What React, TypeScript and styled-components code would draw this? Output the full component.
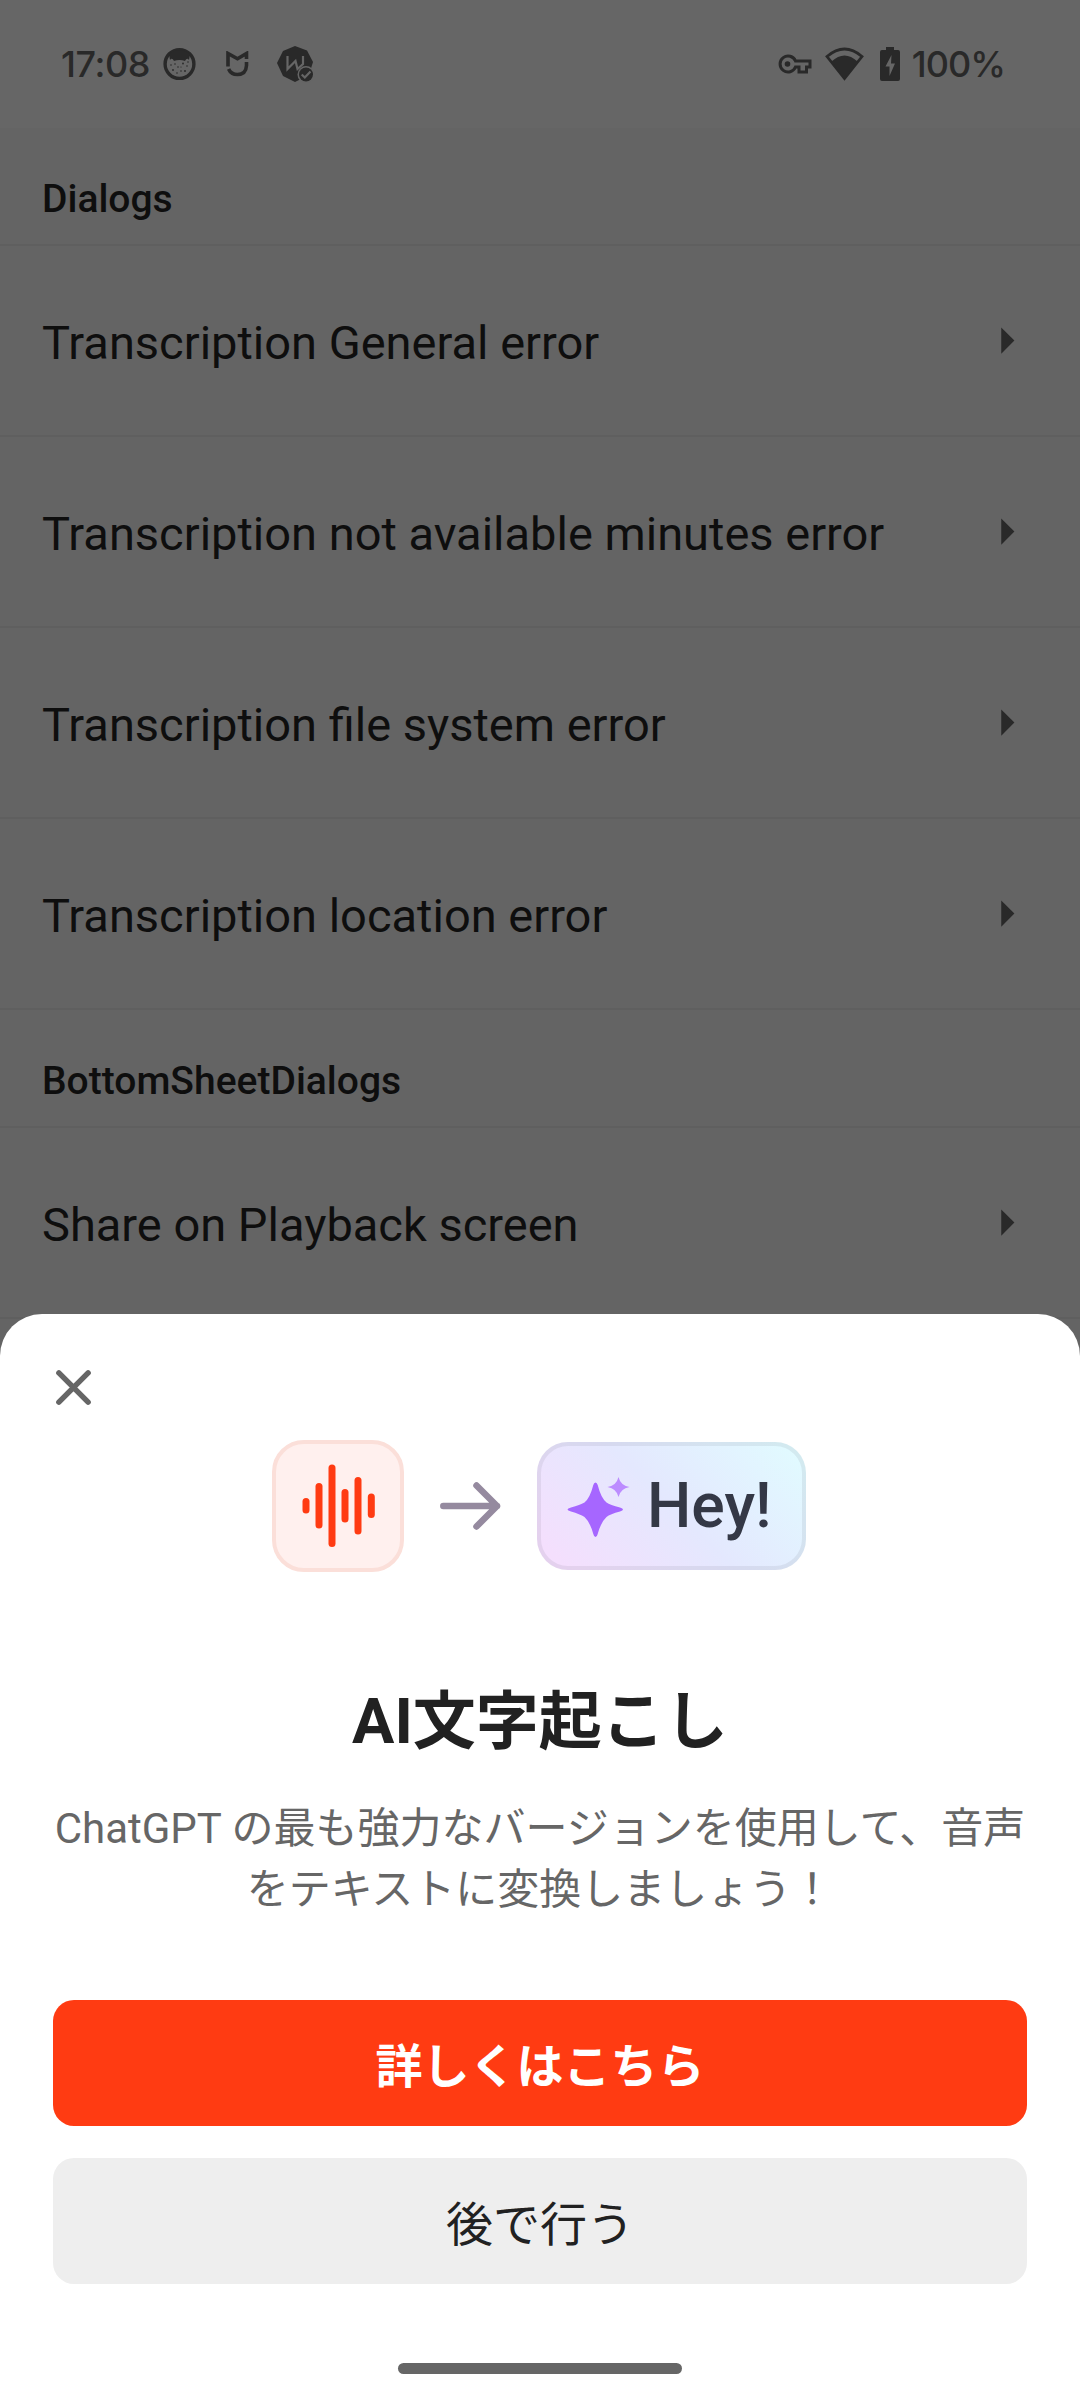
import React from "react";
import styled, { createGlobalStyle } from "styled-components";

const GlobalStyle = createGlobalStyle`
  * { box-sizing: border-box; }
  html, body { margin: 0; padding: 0; }
  body { background: #666; font-family: Roboto, "Noto Sans CJK JP", sans-serif; }
`;

const Screen = styled.div`
  position: relative;
  width: 1080px;
  height: 2400px;
  overflow: hidden;
  background: #646464;
`;

const StatusBar = styled.header`
  display: flex;
  justify-content: space-between;
  height: 128px;
  padding: 28px 75px 28px 61px;
  background: #666;
  color: #292929;
`;

const StatusGroup = styled.div`
  display: flex;
  align-items: center;
  height: 72px;
`;

const StatusText = styled.span<{ $spacing: number; $left?: number }>`
  margin-left: ${(p) => p.$left ?? 0}px;
  font: 500 36px/72px Inter, sans-serif;
  letter-spacing: ${(p) => p.$spacing}px;
  white-space: nowrap;
`;

const StatusIcon = styled.svg<{ $left: number }>`
  display: block;
  flex: none;
  margin-left: ${(p) => p.$left}px;
`;

const SectionHeader = styled.h2`
  margin: 0;
  height: 118px;
  padding: 40px 42px 0;
  border-bottom: 2px solid #5f5f5f;
  color: #0e0e0e;
  font-size: 39px;
  font-weight: 500;
  line-height: 62px;
`;

const Row = styled.div`
  display: flex;
  align-items: center;
  justify-content: space-between;
  height: 191px;
  padding: 0 42px;
  border-bottom: 2px solid #5f5f5f;
  color: #0e0e0e;
  font-size: 47px;
  line-height: 56px;
`;

const RowLabel = styled.span`
  padding-top: 4px;
`;

const Sheet = styled.section`
  position: absolute;
  left: 0;
  right: 0;
  bottom: 0;
  height: 1086px;
  display: flex;
  flex-direction: column;
  align-items: center;
  padding: 0 53px;
  border-radius: 42px 42px 0 0;
  background: #fff;
`;

const CloseButton = styled.button`
  align-self: flex-start;
  display: flex;
  height: 63px;
  margin: 42px 0 0 -11px;
  padding: 0;
  border: 0;
  background: none;
`;

const Hero = styled.div`
  display: flex;
  align-items: center;
  height: 132px;
  margin-top: 21px;
  margin-right: 2px;
`;

const WaveTile = styled.div`
  display: flex;
  width: 132px;
  height: 132px;
  border: 4px solid #fbdfd9;
  border-radius: 32px;
  background: #fff0ee;
`;

const HeroArrow = styled.svg`
  margin: 0 34px 0 33px;
`;

const HeyTile = styled.div`
  display: flex;
  align-items: center;
  width: 269px;
  height: 128px;
  border: 4px solid rgba(52, 56, 70, 0.08);
  border-radius: 31px;
  background: linear-gradient(45deg, #f4dffd 8%, #e4e8fe 50%, #e1faff 95%) border-box;
`;

const HeyText = styled.span`
  margin-left: 14px;
  color: #343846;
  font-size: 62.5px;
  font-weight: 500;
  line-height: 74px;
`;

const Title = styled.h1`
  margin: 104px 0 0;
  color: #212121;
  font-size: 63px;
  font-weight: 700;
  line-height: 92px;
`;

const Body = styled.p`
  width: 974px;
  margin: 30px 0 0;
  color: #666;
  font-size: 42px;
  line-height: 61px;
  text-align: center;
  white-space: pre-line;
`;

const ActionButton = styled.button<{ $primary?: boolean }>`
  flex: none;
  width: 974px;
  height: 126px;
  margin-top: ${(p) => (p.$primary ? 80 : 32)}px;
  padding: 8px 0 0;
  border: 0;
  border-radius: 21px;
  background: ${(p) => (p.$primary ? "#ff3b12" : "#eee")};
  color: ${(p) => (p.$primary ? "#fff" : "#212121")};
  font: ${(p) => (p.$primary ? 700 : 400)} 47px/70px Roboto, "Noto Sans CJK JP", sans-serif;
`;

const HomeIndicator = styled.div`
  width: 284px;
  height: 11px;
  margin-top: 79px;
  border-radius: 6px;
  background: #666;
`;

const Chevron = () => (
  <svg width="63" height="63" viewBox="0 0 24 24" fill="#292929">
    <path d="M10 17l5-5-5-5z" />
  </svg>
);

const dialogs = [
  "Transcription General error",
  "Transcription not available minutes error",
  "Transcription file system error",
  "Transcription location error",
];

const ListRow = ({ label }: { label: string }) => (
  <Row>
    <RowLabel>{label}</RowLabel>
    <Chevron />
  </Row>
);

/* x centre, top and bottom of every bar inside the 124px wave tile */
const bars = [
  [30, 54, 69.5],
  [43, 39, 84.5],
  [56, 20.5, 103],
  [69, 45, 78.5],
  [82, 33, 90.5],
  [95.3, 49.5, 74],
];

export default function App() {
  return (
    <Screen>
      <GlobalStyle />
      <StatusBar>
        <StatusGroup>
          <StatusText $spacing={-0.4}>17:08</StatusText>
          <StatusIcon $left={13} width="33" height="34" viewBox="0 0 33 34" fill="none">
            <circle cx="16.5" cy="17" r="14.4" stroke="currentColor" strokeWidth="3.4" />
            <path d="M6 7Q16-1 27 7L26 13Q24 10 22 14Q16.500 12 11 14Q9 10 7 13z" fill="currentColor" />
            <g fill="currentColor">
              <circle cx="8" cy="18" r=".8" /><circle cx="12" cy="17" r=".8" /><circle cx="20" cy="16.500" r=".9" />
              <circle cx="24" cy="19" r=".8" /><circle cx="15" cy="20" r=".8" /><circle cx="10" cy="23" r=".9" />
              <circle cx="18" cy="24" r=".8" /><circle cx="22" cy="24" r=".9" /><circle cx="14" cy="26" r=".8" />
              <circle cx="25" cy="15" r=".8" /><circle cx="18" cy="20" r=".6" />
            </g>
          </StatusIcon>
          <StatusIcon $left={30} width="23" height="26" viewBox="0 0 23 26" fill="none" stroke="currentColor" strokeWidth="3.6">
            <path d="M2 15.500V2.500L11.500 7.800L20.500 2.500V8M20.500 11V14.500Q20 23.500 11.500 23.500Q5 23.500 2.600 18" />
          </StatusIcon>
          <StatusIcon $left={28} width="38" height="38" viewBox="0 0 38 38">
            <path d="M18 1L30 5.500L36 17L32 30L18 37L6 31L0 18L6 6z" fill="currentColor" />
            <path d="M10.500 11V24L18.500 16L20.500 24L26 19V11" fill="none" stroke="#666" strokeWidth="2.200" />
            <circle cx="29" cy="29.500" r="8.500" fill="#666" />
            <circle cx="29" cy="29.500" r="7" fill="currentColor" />
            <path d="M24.700 29.500L27.800 32.500L33.500 26.500" fill="none" stroke="#666" strokeWidth="2.200" />
          </StatusIcon>
        </StatusGroup>
        <StatusGroup>
          <StatusIcon $left={0} width="34" height="20" viewBox="0 0 34 20" fill="none" stroke="currentColor" strokeWidth="3">
            <path d="M17.500 7A8 8 0 1 0 17.500 13H21V18H28.500V13H32V7z" />
            <circle cx="9.500" cy="10" r="2.800" fill="currentColor" stroke="none" />
          </StatusIcon>
          <StatusIcon $left={13} width="39" height="34" viewBox="0 0 39 34">
            <path d="M2 9.500Q19.500-5.500 37 9.500L19.500 31.500z" fill="none" stroke="currentColor" strokeWidth="2.800" />
            <path d="M6.500 14.500Q19.500 2.500 32.500 14.500L19.500 32z" fill="currentColor" />
          </StatusIcon>
          <StatusIcon $left={16} width="20" height="34" viewBox="0 0 20 34">
            <path d="M6 0H14V3H18Q20 3 20 5V32Q20 34 18 34H2Q0 34 0 32V5Q0 3 2 3H6z" fill="currentColor" />
            <path d="M11.500 8L5.500 19.500H9.500V29L15 16.500H11z" fill="#666" />
          </StatusIcon>
          <StatusText $spacing={-1} $left={12}>100%</StatusText>
        </StatusGroup>
      </StatusBar>

      <SectionHeader>Dialogs</SectionHeader>
      {dialogs.map((label) => (
        <ListRow key={label} label={label} />
      ))}
      <SectionHeader>BottomSheetDialogs</SectionHeader>
      <ListRow label="Share on Playback screen" />

      <Sheet>
        <CloseButton aria-label="閉じる">
          <svg width="63" height="63" viewBox="0 0 63 63" stroke="#666" strokeWidth="5.500" strokeLinecap="round">
            <path d="M16.900 16.900L46.100 46.100M46.100 16.900L16.900 46.100" />
          </svg>
        </CloseButton>
        <Hero>
          <WaveTile>
            <svg width="124" height="124" viewBox="0 0 124 124" fill="#ff3b12">
              {bars.map(([x, top, bottom]) => (
                <rect key={x} x={x - 3.5} y={top} width="7" height={bottom - top} rx="3.500" />
              ))}
            </svg>
          </WaveTile>
          <HeroArrow width="66" height="60" viewBox="0 0 66 60" fill="none" stroke="#958a9f" strokeWidth="6.500" strokeLinecap="round" strokeLinejoin="round">
            <path d="M6.300 30H60M39.500 9.500L60 30L39.500 50.500" />
          </HeroArrow>
          <HeyTile>
            <svg width="92" height="119" viewBox="0 0 92 119">
              <path d="M54.500 35.500Q56 35.500 56.700 38Q60 51 65.500 55.500Q69 58 79 60.500Q82 61.300 82 62.500Q82 63.700 79 64.500Q69 67 65.500 70Q60 75 56.700 87Q56 90 54.500 90Q53 90 52.300 87Q49 75 43.500 70Q39 67 30 64.500Q26.500 63.700 26.500 62.500Q26.500 61.300 30 60.500Q39 58 43.500 55.500Q49 51 52.300 38Q53 35.500 54.500 35.500z" fill="#a666ff" />
              <path d="M77.500 30Q79.500 38.500 88.500 40Q79.500 41.500 77.500 50Q75.500 41.500 66.500 40Q75.500 38.500 77.500 30z" fill="#bc8cff" />
            </svg>
            <HeyText>Hey!</HeyText>
          </HeyTile>
        </Hero>
        <Title>AI文字起こし</Title>
        <Body>{"ChatGPT の最も強力なバージョンを使用して、音声\nをテキストに変換しましょう！"}</Body>
        <ActionButton $primary>詳しくはこちら</ActionButton>
        <ActionButton>後で行う</ActionButton>
        <HomeIndicator />
      </Sheet>
    </Screen>
  );
}
